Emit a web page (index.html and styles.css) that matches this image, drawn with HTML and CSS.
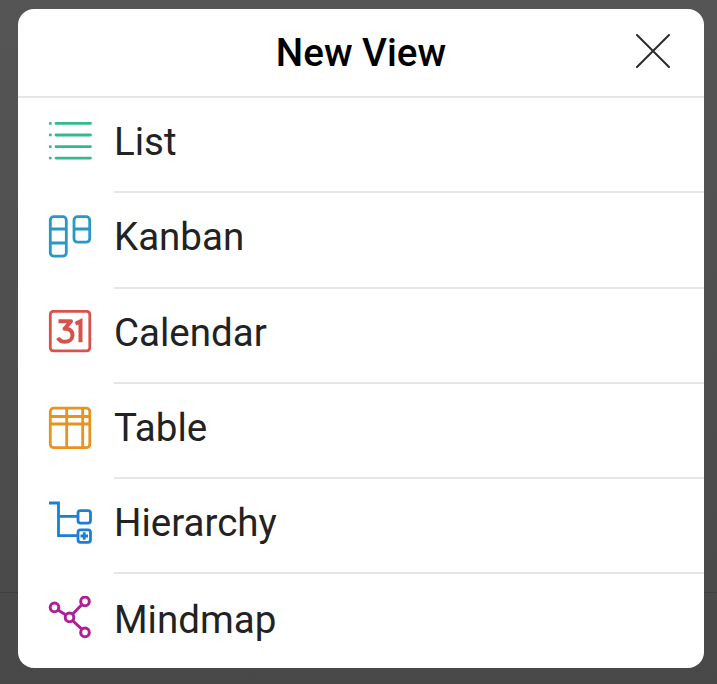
FILE: index.html
```html
<!DOCTYPE html>
<html lang="en">
<head>
  <meta charset="UTF-8">
  <title>New View</title>
  <link rel="stylesheet" href="styles.css">
</head>
<body>
  <div class="sheet">
    <div class="sheet__head">
      <span class="sheet__title">New View</span>
      <svg class="sheet__close" width="34" height="34" viewBox="0 0 34 34">
        <path d="M1 1L33 33M33 1L1 33" fill="none" stroke="#2b2b2b" stroke-width="2" stroke-linecap="round"/>
      </svg>
    </div>

    <div class="view-list">
      <div class="view-row">
        <svg class="view-row__icon" width="44" height="44" viewBox="0 0 44 44" fill="none" stroke="#35b98c" stroke-width="2.800" stroke-linecap="round">
          <path d="M8 3.400H42.500M8 15H42.500M8 26.700H42.500M8 38.100H42.500"/>
          <path d="M2.200 3.400H2.400M2.200 15H2.400M2.200 26.700H2.400M2.200 38.100H2.400"/>
        </svg>
        <span class="view-row__label">List</span>
      </div>
      <div class="view-row">
        <svg class="view-row__icon" width="44" height="44" viewBox="0 0 44 44" fill="none" stroke="#2a98c6" stroke-width="2.800">
          <rect x="2.300" y="1.700" width="16" height="39.500" rx="3.500"/>
          <path d="M2.300 14H18.300M2.300 28H18.300"/>
          <rect x="26" y="1.700" width="15.700" height="25.500" rx="3.500"/>
          <path d="M26 14H41.700"/>
        </svg>
        <span class="view-row__label">Kanban</span>
      </div>
      <div class="view-row">
        <svg class="view-row__icon" width="44" height="44" viewBox="0 0 44 44" fill="none" stroke="#d8524c" stroke-width="2.800">
          <rect x="2.300" y="1.300" width="39.500" height="39.500" rx="3"/>
          <path d="M10.500 11.300H23L16.500 18.800C21 18.300 24.500 20.800 24.500 25.200C24.500 29.300 21 31.800 17 31.800C14 31.800 11.500 30.400 9.800 27.800" stroke-width="4" stroke-linejoin="round"/>
          <path d="M27.500 13.800L32.500 11.300V32.300" stroke-width="4"/>
        </svg>
        <span class="view-row__label">Calendar</span>
      </div>
      <div class="view-row">
        <svg class="view-row__icon" width="44" height="44" viewBox="0 0 44 44" fill="none" stroke="#e8931f" stroke-width="2.800">
          <rect x="2.300" y="2.200" width="39.500" height="39.500" rx="3.500"/>
          <path d="M2.300 10.500H41.800M2.300 18H41.800M18.700 2.200V41.700M34.700 2.200V41.700"/>
        </svg>
        <span class="view-row__label">Table</span>
      </div>
      <div class="view-row">
        <svg class="view-row__icon" width="44" height="44" viewBox="0 0 44 44" fill="none" stroke="#1c7fd6" stroke-width="2.800">
          <path d="M1 2H10.500V34.600H29.500M10.500 15.300H29.500"/>
          <rect x="30" y="9.600" width="12.500" height="12.500" rx="2.500"/>
          <rect x="30" y="28.800" width="12.500" height="12.500" rx="2.500"/>
          <path d="M32.500 35H40M36.200 31.300V38.800"/>
        </svg>
        <span class="view-row__label">Hierarchy</span>
      </div>
      <div class="view-row">
        <svg class="view-row__icon" width="44" height="44" viewBox="0 0 44 44" fill="none" stroke="#ac2195" stroke-width="3">
          <circle cx="6.500" cy="11.400" r="4.300"/>
          <circle cx="21.500" cy="21.400" r="4.300"/>
          <circle cx="37" cy="5.400" r="4.300"/>
          <circle cx="37" cy="36.400" r="4.300"/>
          <path d="M10 14L18 19M24.500 18.300L34 8.500M24.500 24.500L34 33.300"/>
        </svg>
        <span class="view-row__label">Mindmap</span>
      </div>
    </div>
  </div>
</body>
</html>
```

FILE: styles.css
```css
html, body {
  height: 100%;
}

body {
  margin: 0;
  padding: 9px 13px 16px 18px;
  box-sizing: border-box;
  overflow: hidden;
  font-family: Roboto, "Liberation Sans", sans-serif;
  color: #222;
  background:
    linear-gradient(#3f3f3f, #3f3f3f) 0 592px / 100% 1px no-repeat,
    linear-gradient(#555, #484848);
}

.sheet {
  height: 659px;
  background: #fff;
  border-radius: 16px;
  overflow: hidden;
}

.sheet__head {
  display: flex;
  align-items: center;
  justify-content: center;
  position: relative;
  height: 87px;
  border-bottom: 2px solid #e6e6e6;
}

.sheet__title {
  font-size: 38.600px;
  font-weight: 500;
  color: #000;
}

.sheet__close {
  position: absolute;
  top: 25px;
  right: 34px;
}

.view-row {
  display: flex;
  align-items: center;
  gap: 22px;
  height: 95.300px;
  padding-left: 30px;
}

.view-row__icon {
  flex: none;
  margin-bottom: 8px;
}

.view-row__label {
  flex: 1;
  height: 100%;
  display: flex;
  align-items: center;
  padding-bottom: 6px;
  font-size: 38.500px;
  border-bottom: 2px solid #e6e6e6;
  box-sizing: border-box;
}

.view-row:last-child .view-row__label {
  border-bottom: 0;
}
```
